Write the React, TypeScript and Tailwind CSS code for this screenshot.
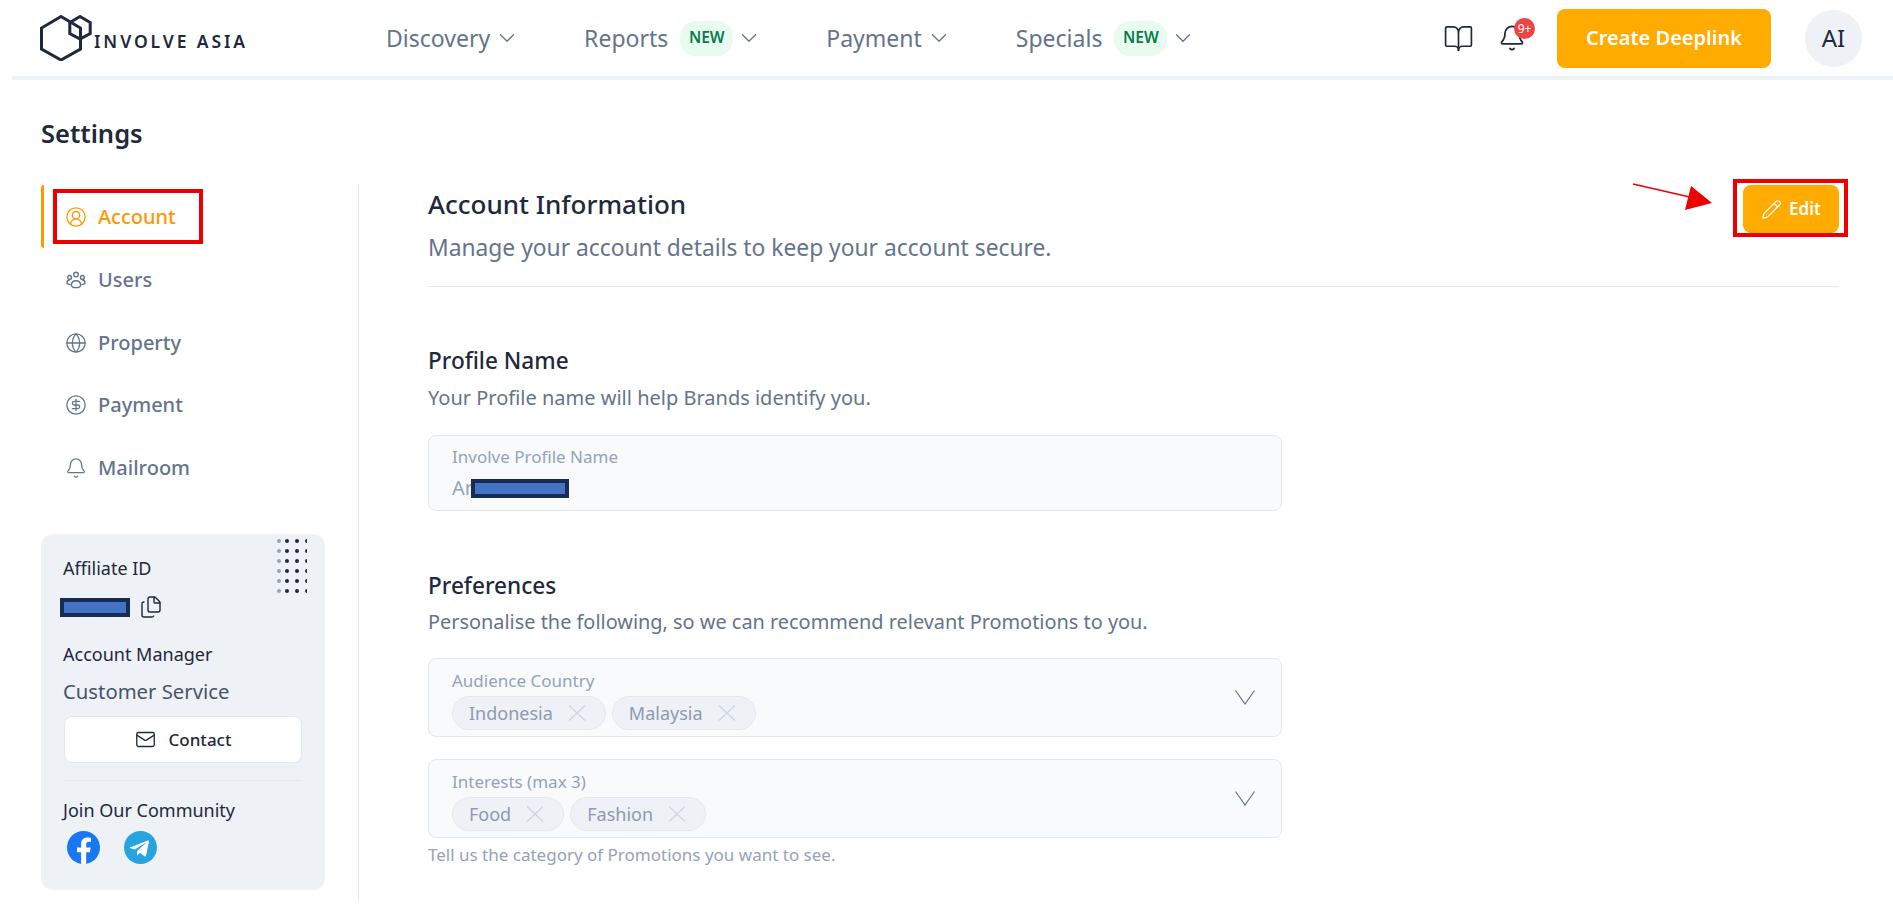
import { Bell, BookOpen, ChevronDown, CircleDollarSign, CircleUserRound, Files, Globe, Mail, Pencil } from 'lucide-react'
import type { ReactNode } from 'react'

function UsersGroupIcon({ className }: { className?: string }) {
  return (
    <svg viewBox="0 0 20 20" fill="none" stroke="currentColor" strokeWidth="1.4" className={className}>
      <circle cx="10" cy="4.6" r="2.3" />
      <circle cx="3.6" cy="7.4" r="1.9" />
      <circle cx="16.4" cy="7.4" r="1.9" />
      <path d="M5.4 15.2c0-2.8 2-4.5 4.600-4.500s4.600 1.700 4.600 4.500c0 1.400-2 2.400-4.600 2.400s-4.600-1-4.600-2.400Z" />
      <path d="M4.600 14.600c-2 0-3.600-.8-3.600-2 0-1.500 1-2.600 2.800-2.600" />
      <path d="M15.400 14.600c2 0 3.600-.8 3.600-2 0-1.500-1-2.600-2.800-2.600" />
    </svg>
  )
}

function Logo() {
  return (
    <div className="flex items-center">
      <svg viewBox="0 0 54 46" fill="none" stroke="#1e293b" strokeWidth="3" className="h-[46px] w-[54px] shrink-0">
        <path d="M21 1.500 1.500 13v21L21 45l19.500-11V13Z" />
        <path d="M40 1.500 29.800 7.500v11L40 24l10.200-5.500v-11Z" />
      </svg>
      <span className="mt-[6px] text-[17.500px] font-semibold tracking-[2.900px] text-[#1e293b] whitespace-nowrap">
        INVOLVE ASIA
      </span>
    </div>
  )
}

function NavItem({ label, isNew }: { label: string; isNew?: boolean }) {
  return (
    <div className="flex items-center text-[#64748b]">
      <span className="text-[23px] leading-[30px]">{label}</span>
      {isNew && (
        <span className="ml-3 flex h-[35px] w-[53px] items-center justify-center rounded-[16px] bg-[#e8fbf0] text-[15.500px] font-semibold text-[#0a7a4a]">
          NEW
        </span>
      )}
      <ChevronDown className={isNew ? 'ml-[3px] size-[26px]' : 'ml-[4px] size-[26px]'} strokeWidth={1.2} />
    </div>
  )
}

function SideItem({ label, icon, active }: { label: string; icon: ReactNode; active?: boolean }) {
  return (
    <div className={`flex h-[62.700px] items-center pl-[21px] pt-[2px] text-[20px] font-medium border-l-[3px] rounded-l-[3px] ${active ? 'border-[#ff9800] text-[#ff9800]' : 'border-transparent text-[#64748b]'}`}>
      <span className="flex w-[33px] shrink-0">{icon}</span>
      {label}
    </div>
  )
}

function Redacted({ className }: { className: string }) {
  return <span className={`border-[4px] border-[#172b54] bg-[#4472c4] ${className}`} />
}

function Chip({ label }: { label: string }) {
  return (
    <span className="flex h-[34px] items-center gap-[15px] rounded-full border border-[#e2e8f0] bg-[#eef1f6] pl-[16px] pr-[19px] text-[18px] text-[#8e9ab0]">
      {label}
      <svg viewBox="0 0 18 16" fill="none" stroke="#cbd5e1" strokeWidth="1.2" className="h-[16px] w-[18px] shrink-0">
        <path d="M1 0.500 17 15.500M17 0.500 1 15.500" />
      </svg>
    </span>
  )
}

function SelectBox({ label, chips }: { label: string; chips: string[] }) {
  return (
    <div className="flex h-[79px] w-[854px] justify-between rounded-[8px] border border-[#e2e8f0] bg-[#f8fafc] pl-[23px] pr-[26px] pt-[10px]">
      <div>
        <div className="text-[17px] leading-[24px] text-[#94a3b8]">{label}</div>
        <div className="mt-[3px] flex gap-[6px]">
          {chips.map((c) => (
            <Chip key={c} label={c} />
          ))}
        </div>
      </div>
      <svg viewBox="0 0 20 15" fill="none" stroke="#64748b" strokeWidth="1.2" className="mt-[21px] h-[15px] w-[20px] shrink-0">
        <path d="M0.500 0.500 10 14 19.500 0.500" />
      </svg>
    </div>
  )
}

export default function App() {
  return (
    <div className="relative h-[904px] overflow-hidden bg-white font-['Noto_Sans',sans-serif]">
      {/* Top bar */}
      <header className="flex h-[76px] items-center pl-[40px] pr-[31px]">
        <Logo />
        <nav className="ml-[138px] flex items-center gap-[64px]">
          <NavItem label="Discovery" />
          <NavItem label="Reports" isNew />
          <NavItem label="Payment" />
          <NavItem label="Specials" isNew />
        </nav>
        <div className="ml-auto flex items-center">
          <BookOpen className="size-[31px] text-[#1e293b]" strokeWidth={1.3} />
          <div className="relative ml-[24px]">
            <Bell className="size-[28px] text-[#1e293b]" strokeWidth={1.5} />
            <span className="absolute -right-[9px] -top-[6px] flex size-[21px] items-center justify-center rounded-full bg-[#ef4444] text-[12px] text-white">
              9+
            </span>
          </div>
          <button className="ml-[31px] h-[59px] w-[214px] rounded-[8px] bg-[#ffab00] text-[20px] font-semibold text-white">
            Create Deeplink
          </button>
          <div className="ml-[34px] flex size-[57px] items-center justify-center rounded-full bg-[#eef1f6] text-[24px] text-[#1e293b]">
            AI
          </div>
        </div>
      </header>
      <div className="ml-[12px] h-[4px] bg-[#eef1f6]" />

      <div className="flex pl-[41px] pt-[37px]">
        {/* Sidebar */}
        <aside className="w-[284px] shrink-0">
          <h1 className="text-[25.500px] font-semibold leading-[32px] text-[#1e293b]">Settings</h1>
          <div className="mt-[36px]">
            <SideItem active label="Account" icon={<CircleUserRound className="size-[22px]" strokeWidth={1.4} />} />
            <SideItem label="Users" icon={<UsersGroupIcon className="ml-[1px] size-[20px]" />} />
            <SideItem label="Property" icon={<Globe className="size-[22px]" strokeWidth={1.4} />} />
            <SideItem label="Payment" icon={<CircleDollarSign className="size-[22px]" strokeWidth={1.4} />} />
            <SideItem label="Mailroom" icon={<Bell className="size-[22px]" strokeWidth={1.4} />} />
          </div>

          <div className="relative mt-[36px] h-[356px] rounded-[12px] bg-[#eef1f6] px-[22px] pt-[22px]">
            <svg viewBox="0 0 30 60" className="absolute right-[18px] top-[5px] h-[60px] w-[30px]">
              {[0, 1, 2, 3, 4, 5].map((row) => (
                <circle key={row} cx="2" cy={2 + row * 10} r="2" fill="#94a3b8" />
              ))}
              {[0, 1, 2, 3, 4, 5, 6].map((row) =>
                [12, 22, 32].map((x) => <circle key={`${row}-${x}`} cx={x - 2} cy={2 + row * 10} r="2" fill="#1e293b" />),
              )}
            </svg>
            <div className="text-[18px] leading-[24px] text-[#1e293b]">Affiliate ID</div>
            <div className="mt-[15px] flex items-center">
              <Redacted className="-ml-[3px] h-[19px] w-[70px]" />
              <Files className="ml-[9px] size-[24px] text-[#1e293b]" strokeWidth={1.4} />
            </div>
            <div className="mt-[23px] text-[18px] leading-[24px] text-[#1e293b]">Account Manager</div>
            <div className="mt-[12px] text-[20.300px] leading-[26px] text-[#475569]">Customer Service</div>
            <button className="mt-[12px] ml-[1px] flex h-[47px] w-[238px] items-center justify-center gap-[13px] rounded-[8px] border border-[#e2e8f0] bg-white text-[17px] font-medium text-[#1e293b]">
              <Mail className="size-[21px]" strokeWidth={1.5} />
              Contact
            </button>
            <div className="mt-[17px] ml-[1px] h-[1px] w-[238px] bg-[#e2e8f0]" />
            <div className="mt-[17px] text-[18px] leading-[24px] text-[#1e293b]">Join Our Community</div>
            <div className="mt-[9px] flex gap-[24px] pl-[4px]">
              <svg viewBox="0 0 32 32" className="size-[33px]">
                <circle cx="16" cy="16" r="16" fill="#1877f2" />
                <path d="M22.200 20.600 23 16h-4.400v-3c0-1.300.6-2.500 2.600-2.500h2V6.600s-1.800-.3-3.500-.3c-3.600 0-6 2.200-6 6.100V16h-4v4.600h4v11.200a16 16 0 0 0 4.900 0V20.600Z" fill="#fff" />
              </svg>
              <svg viewBox="0 0 32 32" className="size-[33px]">
                <circle cx="16" cy="16" r="16" fill="#27a3e0" />
                <path d="M6.500 15.800 23 9.200c.8-.3 1.500.2 1.200 1.300l-2.800 13.200c-.2 1-.8 1.200-1.600.7l-4.300-3.200-2.100 2c-.2.200-.4.400-.9.400l.3-4.400 8-7.200c.3-.3-.1-.5-.5-.2l-9.900 6.200-4.200-1.300c-.9-.3-.9-.9.300-1.600Z" fill="#fff" />
              </svg>
            </div>
          </div>
        </aside>

        <div className="ml-[33px] mt-[68px] h-[716px] w-[1px] shrink-0 bg-[#e2e8f0]" />

        {/* Main form */}
        <main className="ml-[69px] w-[1411px] pt-[68px]">
          <div className="flex items-start justify-between border-b border-[#e2e8f0] pb-[22px]">
            <div>
              <h2 className="text-[26px] font-medium leading-[38px] text-[#1e293b]">Account Information</h2>
              <p className="mt-[9px] text-[22.800px] leading-[32px] text-[#64748b]">
                Manage your account details to keep your account secure.
              </p>
            </div>
            <button className="flex h-[48px] w-[96px] items-center justify-center gap-[7px] rounded-[8px] bg-[#ffab00] text-[17px] font-semibold text-white">
              <Pencil className="size-[21px]" strokeWidth={1.4} />
              Edit
            </button>
          </div>

          <h3 className="mt-[60px] text-[22.600px] font-medium leading-[28px] text-[#1e293b]">Profile Name</h3>
          <p className="mt-[10px] text-[20px] leading-[26px] text-[#64748b]">Your Profile name will help Brands identify you.</p>
          <div className="mt-[24px] h-[76px] w-[854px] rounded-[8px] border border-[#e2e8f0] bg-[#f8fafc] pl-[23px] pt-[9px]">
            <div className="text-[17px] leading-[24px] text-[#94a3b8]">Involve Profile Name</div>
            <div className="mt-[6px] flex items-center text-[20px] leading-[26px] text-[#94a3b8]">
              Ar
              <Redacted className="-ml-[2px] h-[19px] w-[98px]" />
            </div>
          </div>

          <h3 className="mt-[61px] text-[22.600px] font-medium leading-[28px] text-[#1e293b]">Preferences</h3>
          <p className="mt-[9px] text-[19.900px] leading-[26px] text-[#64748b]">
            Personalise the following, so we can recommend relevant Promotions to you.
          </p>
          <div className="mt-[23px] flex flex-col gap-[22px]">
            <SelectBox label="Audience Country" chips={['Indonesia', 'Malaysia']} />
            <SelectBox label="Interests (max 3)" chips={['Food', 'Fashion']} />
          </div>
          <p className="mt-[6px] text-[17px] leading-[22px] text-[#94a3b8]">Tell us the category of Promotions you want to see.</p>
        </main>
      </div>

      {/* Red annotations laid over the screenshot */}
      <div className="absolute left-[53px] top-[189px] h-[55px] w-[150px] border-[4px] border-[#ee0000]" />
      <div className="absolute left-[1733px] top-[179px] h-[58px] w-[115px] border-[4px] border-[#ee0000]" />
      <svg viewBox="0 0 82 32" className="absolute left-[1632px] top-[182px] h-[32px] w-[82px]">
        <path d="M1 2 62 16" stroke="#ee0000" strokeWidth="1.5" />
        <path d="M59 4 80 21 53 28Z" fill="#ee0000" />
      </svg>
    </div>
  )
}
